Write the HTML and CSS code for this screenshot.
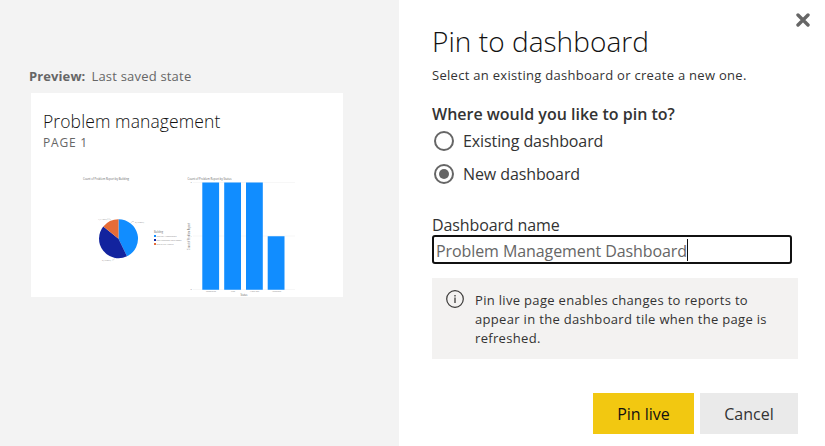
FILE: index.html
```
<!DOCTYPE html>
<html lang="en">
<head>
<meta charset="utf-8">
<title>Pin to dashboard</title>
<link rel="stylesheet" href="styles.css">
</head>
<body>
<div class="dialog">
  <section class="preview">
    <p class="preview-label"><b>Preview:</b> <span>Last saved state</span></p>
    <article class="tile">
      <h2>Problem management</h2>
      <p class="page">PAGE 1</p>
      <svg class="charts" viewBox="31 156 312 141" width="312" height="141">
        <g class="tiny">
          <text x="83" y="180" textLength="46" lengthAdjust="spacingAndGlyphs">Count of Problem Report by Building</text>
          <text x="187.500" y="180" textLength="44" lengthAdjust="spacingAndGlyphs">Count of Problem Report by Status</text>
        </g>
        <path fill="#118dff" d="M118.500 238.700V219.200A19.500 19.500 0 0 1 127 256.250Z"/>
        <path fill="#12239e" d="M118.500 238.700L127 256.250A19.500 19.500 0 0 1 103.300 226.500Z"/>
        <path fill="#e66c37" d="M118.500 238.700L103.300 226.500A19.500 19.500 0 0 1 118.500 219.200Z"/>
        <g class="faint">
          <text x="98" y="220" textLength="9" lengthAdjust="spacingAndGlyphs">1 (14.29%)</text>
          <text x="135" y="223" textLength="9" lengthAdjust="spacingAndGlyphs">3 (42.86%)</text>
          <text x="102" y="261" textLength="9" lengthAdjust="spacingAndGlyphs">3 (42.86%)</text>
          <text x="156.500" y="237" textLength="20" lengthAdjust="spacingAndGlyphs">Central Washington</text>
          <text x="156.500" y="241" textLength="25" lengthAdjust="spacingAndGlyphs">San Francisco Main Tower</text>
          <text x="156.500" y="245" textLength="17" lengthAdjust="spacingAndGlyphs">Seattle 5th Avenue</text>
          <text x="190.500" y="183">2</text><text x="190.500" y="237">1</text><text x="190.500" y="290">0</text>
          <text x="206" y="292.300" textLength="10" lengthAdjust="spacingAndGlyphs">Completed</text>
          <text x="231" y="292.300" textLength="4" lengthAdjust="spacingAndGlyphs">New</text>
          <text x="250" y="292.300" textLength="9" lengthAdjust="spacingAndGlyphs">Work On</text>
          <text x="272" y="292.300" textLength="9" lengthAdjust="spacingAndGlyphs">Assigned</text>
        </g>
        <g class="tiny">
          <text x="154" y="233" textLength="9" lengthAdjust="spacingAndGlyphs">Building</text>
          <text x="240.500" y="296" textLength="7" lengthAdjust="spacingAndGlyphs">Status</text>
          <text transform="translate(190 250) rotate(-90)" textLength="27" lengthAdjust="spacingAndGlyphs">Count of Problem Report</text>
        </g>
        <path fill="none" stroke="#999" stroke-width=".3" d="M107 219h3l1 1.500M134 221.500h-2l-1 1.500M112 260h1.500l1-1.500"/>
        <path fill="none" stroke="#eee" stroke-width=".5" d="M193 182.500h102M193 236h102M193 289.500h102"/>
        <path fill="#118dff" d="M154 235h2v2h-2z"/><path fill="#12239e" d="M154 239h2v2h-2z"/><path fill="#e66c37" d="M154 243h2v2h-2z"/>
        <path fill="#118dff" d="M202.300 182.500h16.800v107.200h-16.800zM224.200 182.500h16.800v107.200h-16.800zM246 182.500h16.800v107.200h-16.800zM267.700 236.200h16.800v53.500h-16.800z"/>
      </svg>
    </article>
  </section>
  <section class="form">
    <button class="close" aria-label="Close"><svg width="14" height="14" viewBox="0 0 14 14"><path d="M2 2l10 10M12 2l-10 10" stroke="#666" stroke-width="3.400" stroke-linecap="round"/></svg></button>
    <h1>Pin to dashboard</h1>
    <p class="intro">Select an existing dashboard or create a new one.</p>
    <h3>Where would you like to pin to?</h3>
    <div class="radio existing"><i></i><span>Existing dashboard</span></div>
    <div class="radio new"><i class="on"></i><span>New dashboard</span></div>
    <p class="name-label">Dashboard name</p>
    <div class="field"><span>Problem Management Dashboard</span><i class="caret"></i></div>
    <div class="info">
      <svg width="18" height="18" viewBox="0 0 18 18"><circle cx="9" cy="9" r="8.300" fill="none" stroke="#3b3a39" stroke-width="1.200"/><path d="M9 7.500v5.500M9 4.900v1.500" stroke="#3b3a39" stroke-width="1.300"/></svg>
      <p>Pin live page enables changes to reports to<br>appear in the dashboard tile when the page is<br>refreshed.</p>
    </div>
    <div class="actions"><button class="primary">Pin live</button><button class="cancel">Cancel</button></div>
  </section>
</div>
</body>
</html>
```
FILE: styles.css
```
* { box-sizing: border-box; }
body { margin: 0; font-family: "Open Sans", "Noto Sans", sans-serif; font-weight: 400; color: #333; background: #fff; }
h1, h2, h3, p { margin: 0; font-weight: inherit; white-space: nowrap; }
button { border: 0; padding: 0; font-family: inherit; font-weight: inherit; background: none; }
.dialog { display: grid; grid-template-columns: 399px 1fr; height: 446px; overflow: hidden; }
.preview { background: #f3f3f3; padding: 66px 0 0 29px; }
.preview-label { height: 27px; line-height: 20px; font-size: 13px; color: #666; display: flex; gap: 6px; letter-spacing: 0.2px; }
.preview-label b { font-weight: 700; letter-spacing: 0.1px; }
.tile { margin-left: 2px; width: 312px; height: 204px; background: #fff; display: flex; flex-direction: column; }
.tile h2 { height: 41px; padding: 16px 0 0 12px; line-height: 25px; font-size: 17.5px; font-weight: 300; letter-spacing: 0.1px; color: #111; }
.page { height: 22px; padding-left: 12px; line-height: 18px; font-size: 12px; letter-spacing: 0.8px; color: #666; }
.charts { display: block; }
.tiny { font-size: 2.8px; fill: #666; }
.faint { font-size: 2.2px; fill: #888; }
.form { position: relative; padding: 21px 27px 0 33px; }
.close { position: absolute; top: 13px; right: 15px; width: 14px; height: 14px; }
.close svg { display: block; }
h1 { height: 41px; line-height: 40px; font-size: 28px; font-weight: 300; letter-spacing: 0.05px; color: #111; }
.intro { height: 38px; padding-top: 3px; line-height: 20px; font-size: 13px; letter-spacing: 0.29px; }
h3 { height: 28px; line-height: 28px; font-size: 16px; font-weight: 600; }
.radio { display: flex; align-items: center; gap: 9.5px; height: 26px; padding-left: 1.5px; font-size: 16px; letter-spacing: -0.1px; white-space: nowrap; }
.radio.new { height: 40px; }
.radio i { width: 20px; height: 20px; border: 2px solid #666; border-radius: 50%; display: grid; place-items: center; }
.radio .on::after { content: ""; width: 10px; height: 10px; border-radius: 50%; background: #666; }
.name-label { height: 41px; padding-top: 20px; line-height: 22px; font-size: 16px; letter-spacing: -0.12px; }
.field { width: 360px; height: 29px; border: 2px solid #111; border-radius: 3px; padding: 2px 0 0 2px; display: flex; align-items: center; font-size: 16px; letter-spacing: -0.08px; color: #666; white-space: nowrap; }
.caret { width: 1px; height: 22px; margin-top: -1px; background: #111; }
.info { margin-top: 14px; height: 81px; width: 366px; background: #f3f2f1; display: flex; gap: 11px; padding: 12px 0 0 14px; font-size: 13px; line-height: 19px; letter-spacing: 0.32px; }
.info p { padding-top: 1px; }
.actions { margin-top: 34px; width: 366px; display: flex; justify-content: flex-end; gap: 6px; }
.actions button { height: 41px; font-size: 16px; }
.primary { width: 101px; background: #f2c811; color: #111; }
.cancel { width: 98px; background: #eaeaea; color: #333; }
```
